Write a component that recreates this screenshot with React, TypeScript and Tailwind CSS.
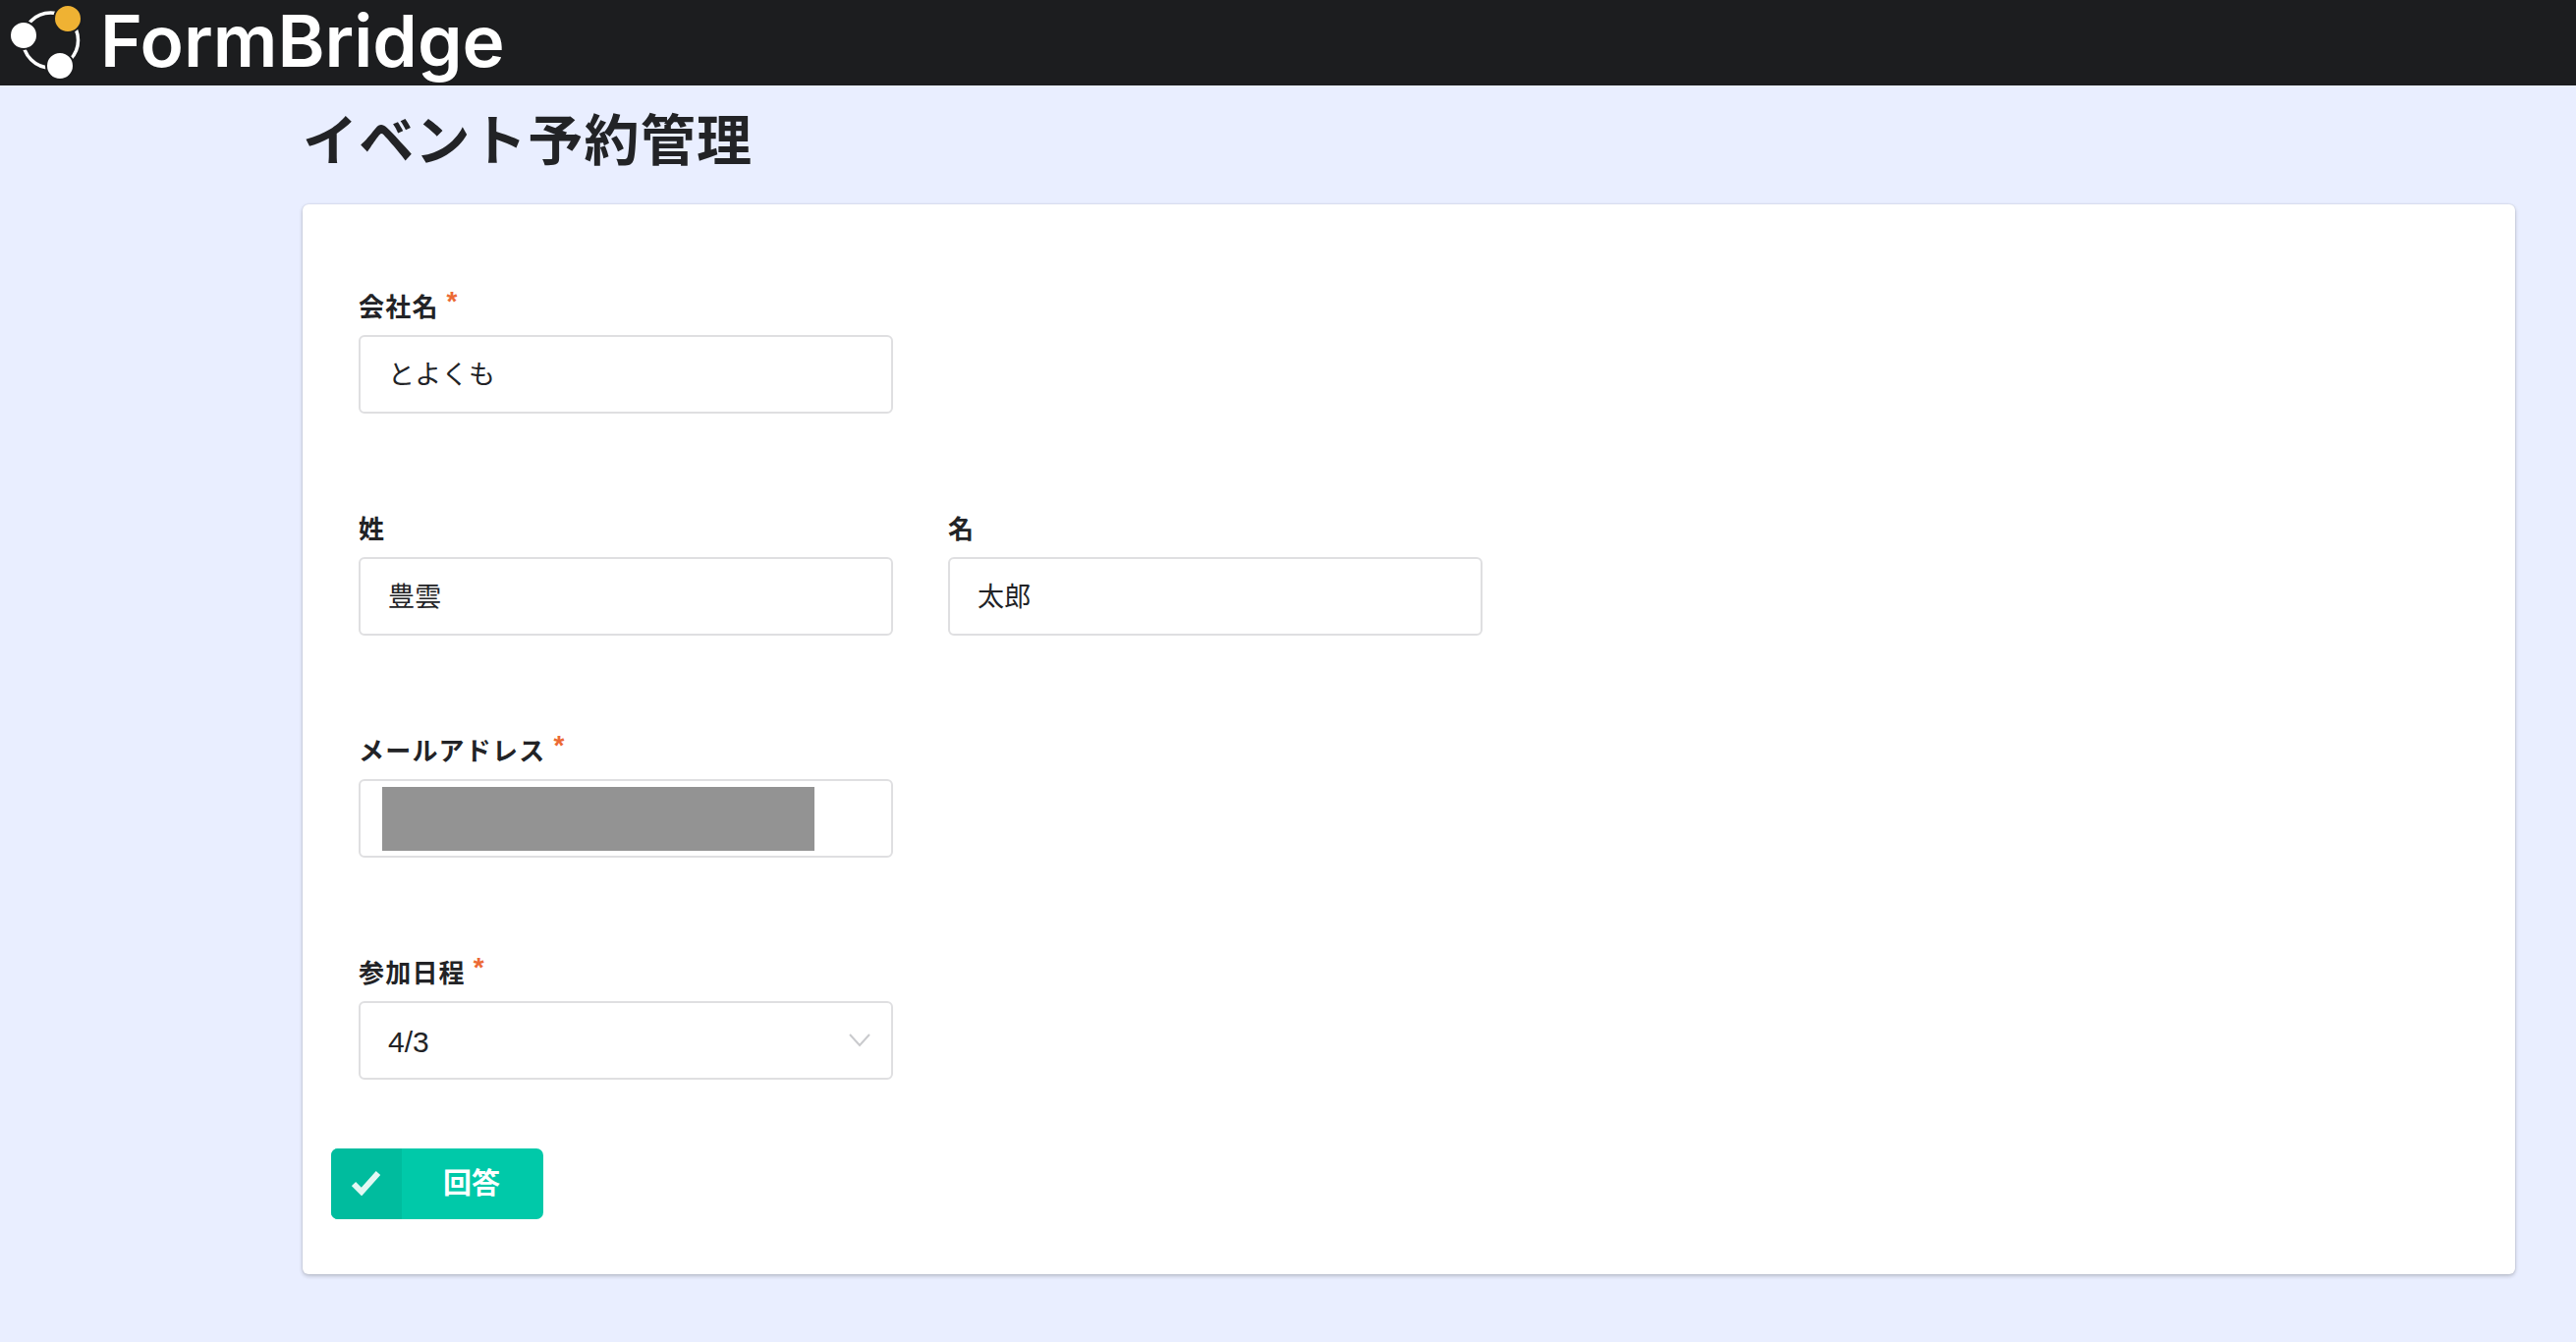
const font = "font-['Liberation_Sans','Noto_Sans_CJK_JP',sans-serif]"

function Logo() {
  return (
    <svg width="96" height="87" viewBox="0 0 96 87" className="shrink-0">
      <circle cx="51.5" cy="41" r="28" fill="none" stroke="#fff" strokeWidth="3.5" />
      <circle cx="24" cy="36" r="14" fill="#fff" stroke="#1c1d1f" strokeWidth="2" />
      <circle cx="69" cy="19" r="14" fill="#efb233" stroke="#1c1d1f" strokeWidth="2" />
      <circle cx="61" cy="67" r="14" fill="#fff" stroke="#1c1d1f" strokeWidth="2" />
    </svg>
  )
}

function Label({ text, required }: { text: string; required?: boolean }) {
  return (
    <div className="flex h-[30px] items-start text-[26px] leading-[30px] font-bold tracking-[1.2px] text-[#222326]">
      {text}
      {required && <span className="ml-[8px] -mt-[6px] text-[28px] text-[#ec6a35]">*</span>}
    </div>
  )
}

function Field({ label, value, required }: { label: string; value: string; required?: boolean }) {
  return (
    <div className="w-[544px]">
      <Label text={label} required={required} />
      <div className="mt-[13px] flex h-[80px] items-center rounded-[6px] border-2 border-[#dfdfe1] bg-white pt-[2px] pl-[28px] text-[27px] tracking-[0.3px] text-[#222326]">
        {value}
      </div>
    </div>
  )
}

export default function App() {
  return (
    <div className={`${font} min-h-screen bg-[#e9eeff]`}>
      <header className="flex h-[87px] items-center bg-[#1c1d1f]">
        <Logo />
        <span className="mb-[4px] ml-[6px] font-['Inter',sans-serif] text-[73px] leading-none font-semibold text-white">FormBridge</span>
      </header>
      <main className="pr-[62px] pl-[308px]">
        <h1 className="flex h-[121px] items-center pb-[8px] text-[56px] font-bold tracking-[1.3px] text-[#222326]">イベント予約管理</h1>
        <div className="h-[1089px] rounded-[6px] bg-white pt-[90px] pl-[29px] shadow-[0_2px_4px_rgba(10,10,10,0.2),0_0_2px_rgba(10,10,10,0.15)]">
          <div className="flex flex-col gap-[103px] pl-[28px]">
            <Field label="会社名" value="とよくも" required />
            <div className="flex gap-[56px]">
              <Field label="姓" value="豊雲" />
              <Field label="名" value="太郎" />
            </div>
            <div className="w-[544px]">
              <Label text="メールアドレス" required />
              <div className="mt-[13px] flex h-[80px] items-center rounded-[6px] border-2 border-[#dfdfe1] bg-white pl-[22px]">
                <div className="h-[65px] w-[440px] bg-[#939393]" />
              </div>
            </div>
            <div className="w-[544px]">
              <Label text="参加日程" required />
              <div className="mt-[13px] flex h-[80px] items-center justify-between rounded-[6px] border-2 border-[#dfdfe1] bg-white pt-[2px] pr-[21px] pl-[28px] text-[30px] text-[#222326]">
                4/3
                <svg width="22" height="14" viewBox="0 0 22 14" fill="none" stroke="#c9cacd" strokeWidth="2" className="-mt-[2px]">
                  <path d="M1 1l10 11L21 1" />
                </svg>
              </div>
            </div>
          </div>
          <button className="mt-[70px] flex h-[72px] w-[216px] overflow-hidden rounded-[7px] bg-[#00c9a9] text-[29px] font-bold text-white">
            <span className="flex h-full w-[72px] items-center justify-center bg-[#00bc9e]">
              <svg width="30" height="26" viewBox="0 0 30 26" fill="none" stroke="#e3f8f4" strokeWidth="6" className="-mt-[2px]">
                <path d="M2 14l8 8L27 3" />
              </svg>
            </span>
            <span className="flex flex-1 items-center justify-center pt-[2px] pr-[2px]">回答</span>
          </button>
        </div>
      </main>
    </div>
  )
}
